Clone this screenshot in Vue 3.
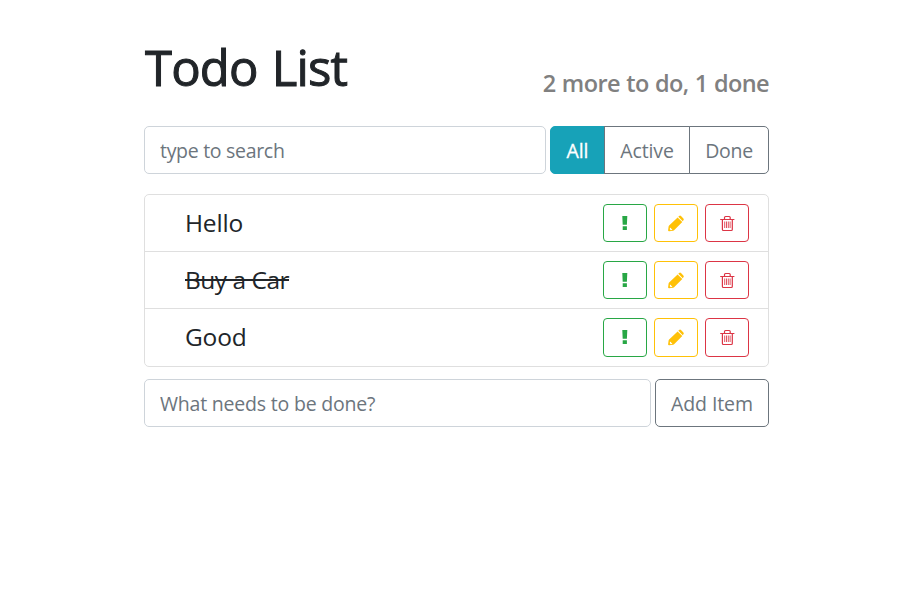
<script setup>
import { ref, computed } from 'vue'

const items = ref([
  { id: 1, label: 'Hello', done: false },
  { id: 2, label: 'Buy a Car', done: true },
  { id: 3, label: 'Good', done: false },
])
const filters = ['All', 'Active', 'Done']
const filter = ref('All')
const term = ref('')
const draft = ref('')

const doneCount = computed(() => items.value.filter((i) => i.done).length)
const todoCount = computed(() => items.value.length - doneCount.value)
const visible = computed(() =>
  items.value.filter(
    (i) =>
      (filter.value === 'All' || (filter.value === 'Done') === i.done) &&
      i.label.toLowerCase().includes(term.value.toLowerCase())
  )
)

function addItem() {
  if (!draft.value) return
  items.value.push({ id: Date.now(), label: draft.value, done: false })
  draft.value = ''
}
function remove(id) {
  items.value = items.value.filter((i) => i.id !== id)
}
</script>

<template>
  <main class="todo-app">
    <header class="head">
      <h1>Todo List</h1>
      <h2>{{ todoCount }} more to do, {{ doneCount }} done</h2>
    </header>

    <div class="bar">
      <input v-model="term" class="field search" type="text" placeholder="type to search" />
      <div class="group">
        <button
          v-for="f in filters"
          :key="f"
          type="button"
          class="btn"
          :class="[f.toLowerCase(), { selected: f === filter }]"
          @click="filter = f"
        >{{ f }}</button>
      </div>
    </div>

    <ul class="list">
      <li v-for="item in visible" :key="item.id">
        <span class="label" :class="{ done: item.done }" @click="item.done = !item.done">{{ item.label }}</span>
        <div class="actions">
          <button type="button" class="act green" aria-label="Important">
            <svg width="20" height="20" viewBox="0 0 20 20" fill="currentColor">
              <path d="M7.3 2.9h5l-.4 8.900H7.700zM7.700 13.200h4.200v3.900H7.700z" />
            </svg>
          </button>
          <button type="button" class="act yellow" aria-label="Edit">
            <svg width="20" height="20" viewBox="0 0 20 20" fill="currentColor">
              <path d="M11.600 4.400l4.700 4.700-8.200 8.200q-.4.4-1 .5l-3.900.5q-1.200.1-1.100-1.100l.5-3.700q.1-.6.500-1zM12.300 3.700l.8-.700q1-.9 1.900 0l2.400 2.400q.9 1 0 1.900l-.6 1z" />
              <path d="M4 14.700l1.100.2.2 1.100 1 .3-.3.700-1.300.2-.9-.9z" fill="#fff" />
            </svg>
          </button>
          <button type="button" class="act red" aria-label="Delete" @click="remove(item.id)">
            <svg width="20" height="20" viewBox="0 0 20 20" fill="none" stroke="currentColor">
              <path d="M3.200 6.500h14.200M7.500 6.200V4.500q0-1 1-1h3.700q1 0 1 1v1.700M5.400 6.700v9.800q0 1 1 1h7.900q1 0 1-1V6.700" stroke-width="1.200" />
              <path d="M7.700 8.500v6.500M9.500 8.500v6.500M11.300 8.500v6.500M13.100 8.500v6.500" stroke-width=".85" />
            </svg>
          </button>
        </div>
      </li>
    </ul>

    <form class="bar" @submit.prevent="addItem">
      <input v-model="draft" class="field add" type="text" placeholder="What needs to be done?" />
      <button type="submit" class="btn submit">Add Item</button>
    </form>
  </main>
</template>

<style>
body {
  margin: 0;
  background: #fff;
}
</style>

<style scoped>
* {
  box-sizing: border-box;
}
.todo-app {
  width: 625px;
  margin-left: 144px;
  padding-top: 38px;
  color: #212529;
  font-family: "Open Sans", "Noto Sans", sans-serif;
  font-size: 20px;
}
.head {
  display: flex;
  justify-content: space-between;
  height: 88px;
}
h1,
h2 {
  margin: 0;
  white-space: nowrap;
}
h1 {
  margin-top: -1px;
  padding-left: 1px;
  font-size: 49px;
  font-weight: 400;
  letter-spacing: -0.8px;
  word-spacing: 2px;
  line-height: 60px;
  -webkit-text-stroke: 1px currentColor;
}
h2 {
  padding-top: 30px;
  color: #808080;
  font-size: 23.5px;
  font-weight: 600;
  letter-spacing: -0.6px;
  word-spacing: 0.8px;
  line-height: 30px;
}
.bar {
  display: flex;
  gap: 4px;
  height: 48px;
}
.field {
  flex: 1;
  min-width: 0;
  height: 48px;
  padding: 0 15px;
  border: 1px solid #ced4da;
  border-radius: 5px;
  background: #fff;
  color: #495057;
  font: inherit;
  font-size: 19.5px;
  letter-spacing: -0.2px;
  outline: none;
}
.search {
  letter-spacing: -0.3px;
}
.field::placeholder {
  color: #6c757d;
  opacity: 1;
}
.group {
  display: flex;
}
.btn {
  height: 48px;
  padding: 0;
  border: 1px solid #6c757d;
  background: #fff;
  color: #6c757d;
  font: inherit;
  font-size: 19.5px;
  letter-spacing: -0.1px;
  white-space: nowrap;
}
.all {
  width: 55px;
  border-radius: 5px 0 0 5px;
}
.active {
  width: 86px;
  margin-left: -1px;
}
.done.btn {
  width: 80px;
  margin-left: -1px;
  border-radius: 0 5px 5px 0;
  letter-spacing: -0.3px;
}
.btn.selected {
  border-color: #17a2b8;
  background: #17a2b8;
  color: #fff;
  -webkit-text-stroke: 0.3px currentColor;
}
.submit {
  width: 114px;
  border-radius: 5px;
}
.list {
  margin: 20px 0 12px;
  padding: 0;
  border: 1px solid #dfdfdf;
  border-radius: 5px;
  list-style: none;
}
li {
  display: flex;
  justify-content: space-between;
  height: 57px;
  padding: 9px 19px 9px 40px;
  border-bottom: 1px solid #dfdfdf;
}
li:last-child {
  border-bottom: 0;
}
.label {
  font-size: 24.5px;
  letter-spacing: -0.2px;
  line-height: 38px;
}
.label.done {
  letter-spacing: -0.5px;
  text-decoration: line-through;
  text-decoration-thickness: 2px;
}
.actions {
  display: flex;
  gap: 7px;
}
.act {
  display: flex;
  align-items: center;
  justify-content: center;
  width: 44px;
  height: 38px;
  padding: 0;
  border: 1px solid currentColor;
  border-radius: 4px;
  background: #fff;
}
li:last-child .act {
  height: 39px;
  padding-bottom: 1px;
}
.green {
  color: #28a745;
}
.yellow {
  color: #ffc107;
}
.red {
  color: #dc3545;
}
</style>
